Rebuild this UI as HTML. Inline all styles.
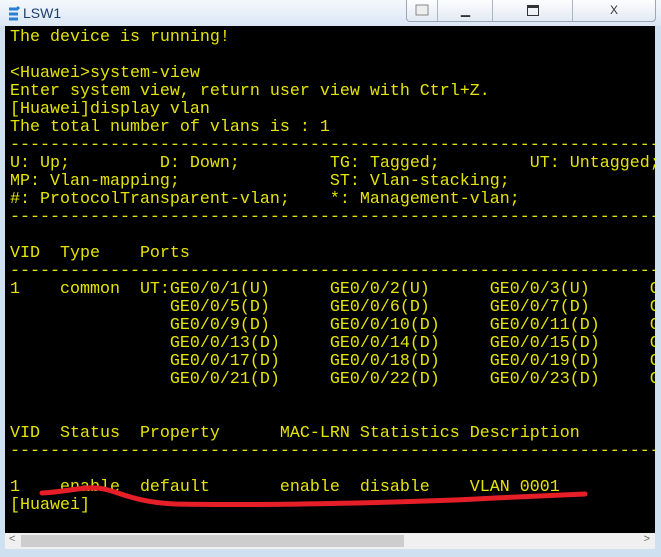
<!DOCTYPE html>
<html><head><meta charset="utf-8"><style>
*{margin:0;padding:0}
body{width:661px;height:557px;overflow:hidden;background:#cfe0f1;position:relative;font-family:"Liberation Sans",sans-serif}
.title{position:absolute;left:0;top:0;width:661px;height:26px;background:linear-gradient(#f4f8fc,#dbe7f4)}
.tt{position:absolute;left:23px;top:5px;font-size:14px;color:#1d3d6b}
.btns{position:absolute;left:406px;top:0;width:248px;height:21px;border:1px solid #9aa7b7;border-top:none;border-radius:0 0 4px 4px;background:linear-gradient(#fdfdfe,#e3eaf3)}
.btns div{position:absolute;top:0;height:21px;border-left:1px solid #aab6c4;text-align:center;font-size:12px;color:#333;line-height:21px}
.term{position:absolute;left:5px;top:26px;width:650px;height:507px;background:#000;overflow:hidden}
pre{position:absolute;left:5px;top:3px;font-family:"Liberation Mono",monospace;font-size:16.67px;line-height:18px;color:#e4e400;white-space:pre}
.sb{position:absolute;left:5px;top:533px;width:650px;height:16px;background:#f0f0f0}
.thumb{position:absolute;left:16px;top:2px;width:383px;height:12px;background:#cdcdcd}
</style></head><body>
<div class="title">
<svg style="position:absolute;left:7px;top:5px" width="14" height="16"><path d="M2 4h8l2-2M2 9h9M2 14h9" stroke="#2a7fd0" stroke-width="3" fill="none"/></svg>
<div class="tt">LSW1</div>
<div class="btns">
<div style="left:0;width:30px;border-left:none"><svg width="14" height="12" style="margin-top:4px"><rect x="1" y="1" width="12" height="10" fill="#eee" stroke="#888"/></svg></div>
<div style="left:30px;width:55px">▁</div>
<div style="left:85px;width:80px"><svg width="12" height="11" style="margin-top:5px"><rect x="0.5" y="0.5" width="11" height="10" fill="none" stroke="#333"/><rect x="0" y="0" width="12" height="3" fill="#333"/></svg></div>
<div style="left:165px;width:82px">X</div>
</div>
</div>
<div class="term">
<pre>The device is running!

&lt;Huawei&gt;system-view
Enter system view, return user view with Ctrl+Z.
[Huawei]display vlan
The total number of vlans is : 1
------------------------------------------------------------------------
U: Up;         D: Down;         TG: Tagged;         UT: Untagged;
MP: Vlan-mapping;               ST: Vlan-stacking;
#: ProtocolTransparent-vlan;    *: Management-vlan;
------------------------------------------------------------------------

VID  Type    Ports
------------------------------------------------------------------------
1    common  UT:GE0/0/1(U)      GE0/0/2(U)      GE0/0/3(U)      GE0/0/4(U)
                GE0/0/5(D)      GE0/0/6(D)      GE0/0/7(D)      GE0/0/8(D)
                GE0/0/9(D)      GE0/0/10(D)     GE0/0/11(D)     GE0/0/12(D)
                GE0/0/13(D)     GE0/0/14(D)     GE0/0/15(D)     GE0/0/16(D)
                GE0/0/17(D)     GE0/0/18(D)     GE0/0/19(D)     GE0/0/20(D)
                GE0/0/21(D)     GE0/0/22(D)     GE0/0/23(D)     GE0/0/24(D)


VID  Status  Property      MAC-LRN Statistics Description
------------------------------------------------------------------------

1    enable  default       enable  disable    VLAN 0001
[Huawei]</pre>
<svg style="position:absolute;left:0;top:0" width="650" height="507"><path d="M37 467 C60 466 75 461 92 462 C110 463 125 476 170 478 C260 480 420 476 490 472 C530 470 560 469 580 468" stroke="#e61e28" stroke-width="5" fill="none" stroke-linecap="round"/></svg>
</div>
<div class="sb"><span style="position:absolute;left:4px;top:0;font-size:11px;color:#666">&lt;</span><div class="thumb"></div><span style="position:absolute;right:5px;top:0;font-size:11px;color:#666">&gt;</span></div>
</body></html>
